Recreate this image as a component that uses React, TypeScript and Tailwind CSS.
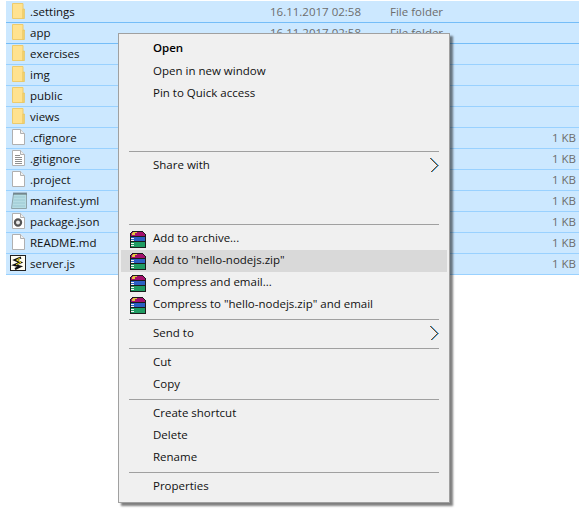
const FILES = [
  { name: ".settings", icon: "folder", date: "16.11.2017 02:58", type: "File folder", size: "" },
  { name: "app", icon: "folder", date: "16.11.2017 02:58", type: "File folder", size: "" },
  { name: "exercises", icon: "folder", date: "", type: "", size: "" },
  { name: "img", icon: "folder", date: "", type: "", size: "" },
  { name: "public", icon: "folder", date: "", type: "", size: "" },
  { name: "views", icon: "folder", date: "", type: "", size: "" },
  { name: ".cfignore", icon: "blank", date: "", type: "File", size: "1 KB" },
  { name: ".gitignore", icon: "text", date: "", type: "ment", size: "1 KB" },
  { name: ".project", icon: "blank", date: "", type: "le", size: "1 KB" },
  { name: "manifest.yml", icon: "notepad", date: "", type: "", size: "1 KB" },
  { name: "package.json", icon: "gear", date: "", type: "", size: "1 KB" },
  { name: "README.md", icon: "blank", date: "", type: "", size: "1 KB" },
  { name: "server.js", icon: "script", date: "", type: "ile", size: "1 KB" },
];

function FileIcon({ kind }: { kind: string }) {
  if (kind === "folder") {
    return (
      <svg width="13" height="16" viewBox="0 0 13 16" className="shrink-0">
        <path d="M0.5 0.5H11V15.5H0.5Z" fill="#ffe28f" stroke="#eccb6c" />
        <path d="M11 6H12.5V15.5H11Z" fill="#f8d775" stroke="#e6bf55" strokeWidth="0.6" />
      </svg>
    );
  }
  if (kind === "notepad") {
    return (
      <svg width="16" height="17" viewBox="0 0 16 17" className="ml-[-1px] shrink-0">
        <path d="M2.5 2H15.5V16.5H0.5Z" fill="#b5dce3" stroke="#8ea3a8" />
        <path d="M2.5 1.5H15.5" stroke="#39474b" strokeDasharray="1 1" strokeWidth="2" />
        <path d="M3 5H14M2.6 8H14M2.2 11H14M1.8 14H14" stroke="#9cc8d2" />
      </svg>
    );
  }
  if (kind === "script") {
    return (
      <svg width="16" height="16" viewBox="0 0 16 16" className="ml-[-2px] shrink-0">
        <rect x="0.5" y="0.5" width="15" height="15" fill="#fffdf0" stroke="#222" />
        <path d="M11 2.5L5 5L10.5 7.5L4.5 10L10 11.5L5 14" fill="none" stroke="#111" strokeWidth="2.2" />
        <path d="M10 3L6.5 5L11 7.3L6 9.7" fill="none" stroke="#e6d422" strokeWidth="1" />
      </svg>
    );
  }
  return (
    <svg width="13" height="16" viewBox="0 0 13 16" className="shrink-0">
      <path d="M0.5 0.5H8.5L12.5 4.5V15.5H0.5Z" fill="#fff" stroke="#b0b0b0" />
      <path d="M8.5 0.5V4.5H12.5" fill="#f0f0f0" stroke="#b0b0b0" />
      {kind === "text" && (
        <path d="M3 5.5H8M3 7.5H10M3 9.5H10M3 11.5H10M3 13.5H10" stroke="#8f8f8f" />
      )}
      {kind === "gear" && (
        <circle cx="6" cy="9.5" r="3.1" fill="#e8e8e8" stroke="#555" strokeWidth="2.2" />
      )}
    </svg>
  );
}

// stack of three books, WinRAR style
function RarIcon() {
  return (
    <svg width="17" height="17" viewBox="0 0 17 17" className="shrink-0" shapeRendering="crispEdges">
      <path d="M3.5 0.5H13.5L16.5 3.5V5.5H1V3.5Z" fill="#a40f6d" stroke="#1c1c1c" />
      <path d="M4 1H8V2H6V4H3V2Z" fill="#e3c93f" />
      <path d="M1 5.5H16.5V10.5H1Z" fill="#2b5fc4" stroke="#1c1c1c" />
      <path d="M1 10.5H16.5V16.5H1Z" fill="#1f9c62" stroke="#1c1c1c" />
      <path d="M1.5 7H5M1.5 9H5M1.5 12H5M1.5 14H5" stroke="#f4f4f4" />
    </svg>
  );
}

function Arrow() {
  return (
    <svg width="9" height="15" viewBox="0 0 9 15" className="absolute left-[309px] top-[3px]" shapeRendering="crispEdges">
      <path d="M0.5 0.5L7.5 7.5L0.5 14.5" fill="none" stroke="#2f9be8" strokeWidth="1" transform="translate(1 0)" />
      <path d="M0.5 0.5L7.5 7.5L0.5 14.5" fill="none" stroke="#8a4a14" strokeWidth="1" />
    </svg>
  );
}

function Separator({ className }: { className: string }) {
  return <div className={`mx-[10px] h-px bg-[#a0a0a0] ${className}`} />;
}

function Item({
  label,
  className = "",
  rar,
  bold,
  arrow,
  active,
}: {
  label: string;
  className?: string;
  rar?: boolean;
  bold?: boolean;
  arrow?: boolean;
  active?: boolean;
}) {
  return (
    <div
      className={`relative mx-[2px] flex h-[22px] items-center pl-[32px] ${active ? "bg-[#d9d9d9]" : ""} ${className}`}
    >
      {rar && (
        <span className="absolute left-[8px] top-[3px]">
          <RarIcon />
        </span>
      )}
      <span className={`pb-[2px] ${bold ? "font-semibold text-black" : ""}`}>{label}</span>
      {arrow && <Arrow />}
    </div>
  );
}

export default function App() {
  return (
    <div className="relative h-[509px] w-[579px] overflow-hidden bg-white font-['Open_Sans',sans-serif] text-[11.5px] text-[#111]">
      <div className="ml-[6px] mt-px border-t border-[#cce8ff]">
        {FILES.map((f) => (
          <div
            key={f.name}
            className={`flex h-[21px] items-center border-b bg-[#cce8ff] pl-[6px] ${f.name === ".settings" || f.name === "app" ? "border-[#74bdf8]" : "border-[#99d1ff]"}`}
          >
            <span className="flex w-[19px] items-center pb-[2px]">
              <FileIcon kind={f.icon} />
            </span>
            <span className="ml-[-1px] w-[240px] leading-none">{f.name}</span>
            <span className="w-[120px] text-[#6d6d6d]">{f.date}</span>
            <span className="w-[134px] text-[#6d6d6d]">{f.type}</span>
            <span className="w-[52px] text-right text-[#6d6d6d]">{f.size}</span>
          </div>
        ))}
      </div>

      <div className="absolute left-[118px] top-[33px] h-[470px] w-[332px] border border-[#a0a0a0] bg-[#f0f0f0] pt-[4px] shadow-[3px_3px_2px_rgba(0,0,0,0.5)]">
        <Item label="Open" bold />
        <Item label="Open in new window" className="mt-[1px]" />
        <Item label="Pin to Quick access" />
        <Separator className="mt-[46px]" />
        <Item label="Share with" arrow className="mt-[3px]" />
        <Separator className="mt-[47px]" />
        <Item label="Add to archive..." rar className="mt-[3px]" />
        <Item label={'Add to "hello-nodejs.zip"'} rar active />
        <Item label="Compress and email..." rar />
        <Item label={'Compress to "hello-nodejs.zip" and email'} rar />
        <Separator className="mt-[3px]" />
        <Item label="Send to" arrow className="mt-[3px]" />
        <Separator className="mt-[3px]" />
        <Item label="Cut" className="mt-[3px]" />
        <Item label="Copy" />
        <Separator className="mt-[3px]" />
        <Item label="Create shortcut" className="mt-[3px]" />
        <Item label="Delete" />
        <Item label="Rename" />
        <Separator className="mt-[3px]" />
        <Item label="Properties" className="mt-[3px]" />
      </div>
    </div>
  );
}
